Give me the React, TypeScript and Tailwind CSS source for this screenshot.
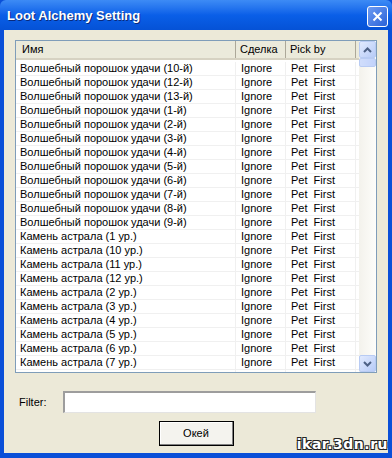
const items = [
  "Волшебный порошок удачи (10-й)",
  "Волшебный порошок удачи (12-й)",
  "Волшебный порошок удачи (13-й)",
  "Волшебный порошок удачи (1-й)",
  "Волшебный порошок удачи (2-й)",
  "Волшебный порошок удачи (3-й)",
  "Волшебный порошок удачи (4-й)",
  "Волшебный порошок удачи (5-й)",
  "Волшебный порошок удачи (6-й)",
  "Волшебный порошок удачи (7-й)",
  "Волшебный порошок удачи (8-й)",
  "Волшебный порошок удачи (9-й)",
  "Камень астрала (1 ур.)",
  "Камень астрала (10 ур.)",
  "Камень астрала (11 ур.)",
  "Камень астрала (12 ур.)",
  "Камень астрала (2 ур.)",
  "Камень астрала (3 ур.)",
  "Камень астрала (4 ур.)",
  "Камень астрала (5 ур.)",
  "Камень астрала (6 ур.)",
  "Камень астрала (7 ур.)",
  "Камень астрала (8 ур.)",
];

function Arrow({ up }: { up?: boolean }) {
  return (
    <svg width="9" height="6" viewBox="0 0 9 6">
      <path
        d={up ? "M1 5 L4.5 1.5 L8 5" : "M1 1 L4.5 4.5 L8 1"}
        fill="none"
        stroke="#4d6185"
        strokeWidth="2"
      />
    </svg>
  );
}

export default function App() {
  return (
    <div
      className="w-[392px] h-[458px] flex flex-col bg-[#0a4fd8] text-[11px] text-black overflow-hidden"
      style={{ fontFamily: '"Liberation Sans", Arial, sans-serif' }}
    >
      {/* title bar */}
      <div className="h-[30px] flex items-center justify-between pl-[7px] pr-[4px] pt-[2px] bg-gradient-to-b from-[#3d8bf5] via-[#0a5fe8] to-[#0552d6] rounded-t-[6px]">
        <span className="text-white font-bold text-[13px] [text-shadow:1px_1px_0_#0a2a7a]">
          Loot Alchemy Setting
        </span>
        <div className="w-[21px] h-[21px] rounded-[3px] border border-white bg-gradient-to-br from-[#6d9bf2] to-[#2a62d8] flex items-center justify-center">
          <svg width="11" height="11" viewBox="0 0 11 11">
            <path d="M1.5 1.5 L9.5 9.5 M9.5 1.5 L1.5 9.5" stroke="white" strokeWidth="2" />
          </svg>
        </div>
      </div>

      {/* body */}
      <div className="flex-1 mx-[4px] mb-[5px] bg-[#ece9d8] flex flex-col pt-[10px] pl-[11px] pr-[11px]">
        <div className="h-[333px] border border-[#7f9db9] bg-white flex overflow-hidden">
          <div className="flex-1 flex flex-col overflow-hidden">
            <div className="h-[19px] flex bg-[#ebeadb] border-b-2 border-[#d6d2c2] shrink-0">
              <div className="w-[220px] pl-[6px] border-r border-[#aca899] flex items-center">Имя</div>
              <div className="w-[50px] pl-[4px] border-r border-[#aca899] flex items-center">Сделка</div>
              <div className="w-[70px] pl-[4px] border-r border-[#aca899] flex items-center">Pick by</div>
            </div>
            <div className="flex flex-col pt-[2px]">
              {items.map((name) => (
                <div key={name} className="h-[14px] flex border-b border-[#f0f0f0] shrink-0 leading-[13px]">
                  <div className="w-[220px] pl-[4px] border-r border-[#f0f0f0] whitespace-nowrap">{name}</div>
                  <div className="w-[50px] pl-[5px] border-r border-[#f0f0f0]">Ignore</div>
                  <div className="w-[70px] pl-[5px] border-r border-[#f0f0f0] whitespace-pre">Pet  First</div>
                </div>
              ))}
            </div>
          </div>
          {/* scrollbar */}
          <div className="w-[17px] shrink-0 flex flex-col bg-gradient-to-r from-[#f3f2ec] to-[#fdfdfa]">
            <div className="h-[17px] rounded-[2px] border border-[#b8cbf3] bg-gradient-to-br from-[#e1eafe] to-[#b7cbf7] flex items-center justify-center">
              <Arrow up />
            </div>
            <div className="h-[9px] rounded-[2px] border border-[#b8cbf3] bg-gradient-to-r from-[#d0ddfb] to-[#c2d3fb]" />
            <div className="flex-1" />
            <div className="h-[17px] rounded-[2px] border border-[#b8cbf3] bg-gradient-to-br from-[#e1eafe] to-[#b7cbf7] flex items-center justify-center">
              <Arrow />
            </div>
          </div>
        </div>

        <div className="flex items-center mt-[18px] h-[22px]">
          <span className="w-[48px] pl-[4px]">Filter:</span>
          <div className="w-[253px] h-[22px] bg-white border-t-2 border-l-2 border-[#9d9d9d] border-r border-b border-r-[#e3e3e3] border-b-[#e3e3e3]" />
        </div>

        <div className="flex justify-center mt-[8px] relative">
          <div className="w-[75px] h-[25px] border border-black bg-[#f4f3ee] flex items-center justify-center shadow-[inset_-1px_-1px_0_#808080,inset_1px_1px_0_#fff]">
            Окей
          </div>
          <span
            className="absolute right-[-11px] top-[13px] text-white font-bold text-[14px] tracking-[0.5px] [text-shadow:1px_1px_0_#222,-1px_-1px_0_#222,1px_-1px_0_#222,-1px_1px_0_#222]"
            style={{ fontFamily: '"DejaVu Sans", sans-serif' }}
          >
            ikar.3dn.ru
          </span>
        </div>
      </div>
    </div>
  );
}
